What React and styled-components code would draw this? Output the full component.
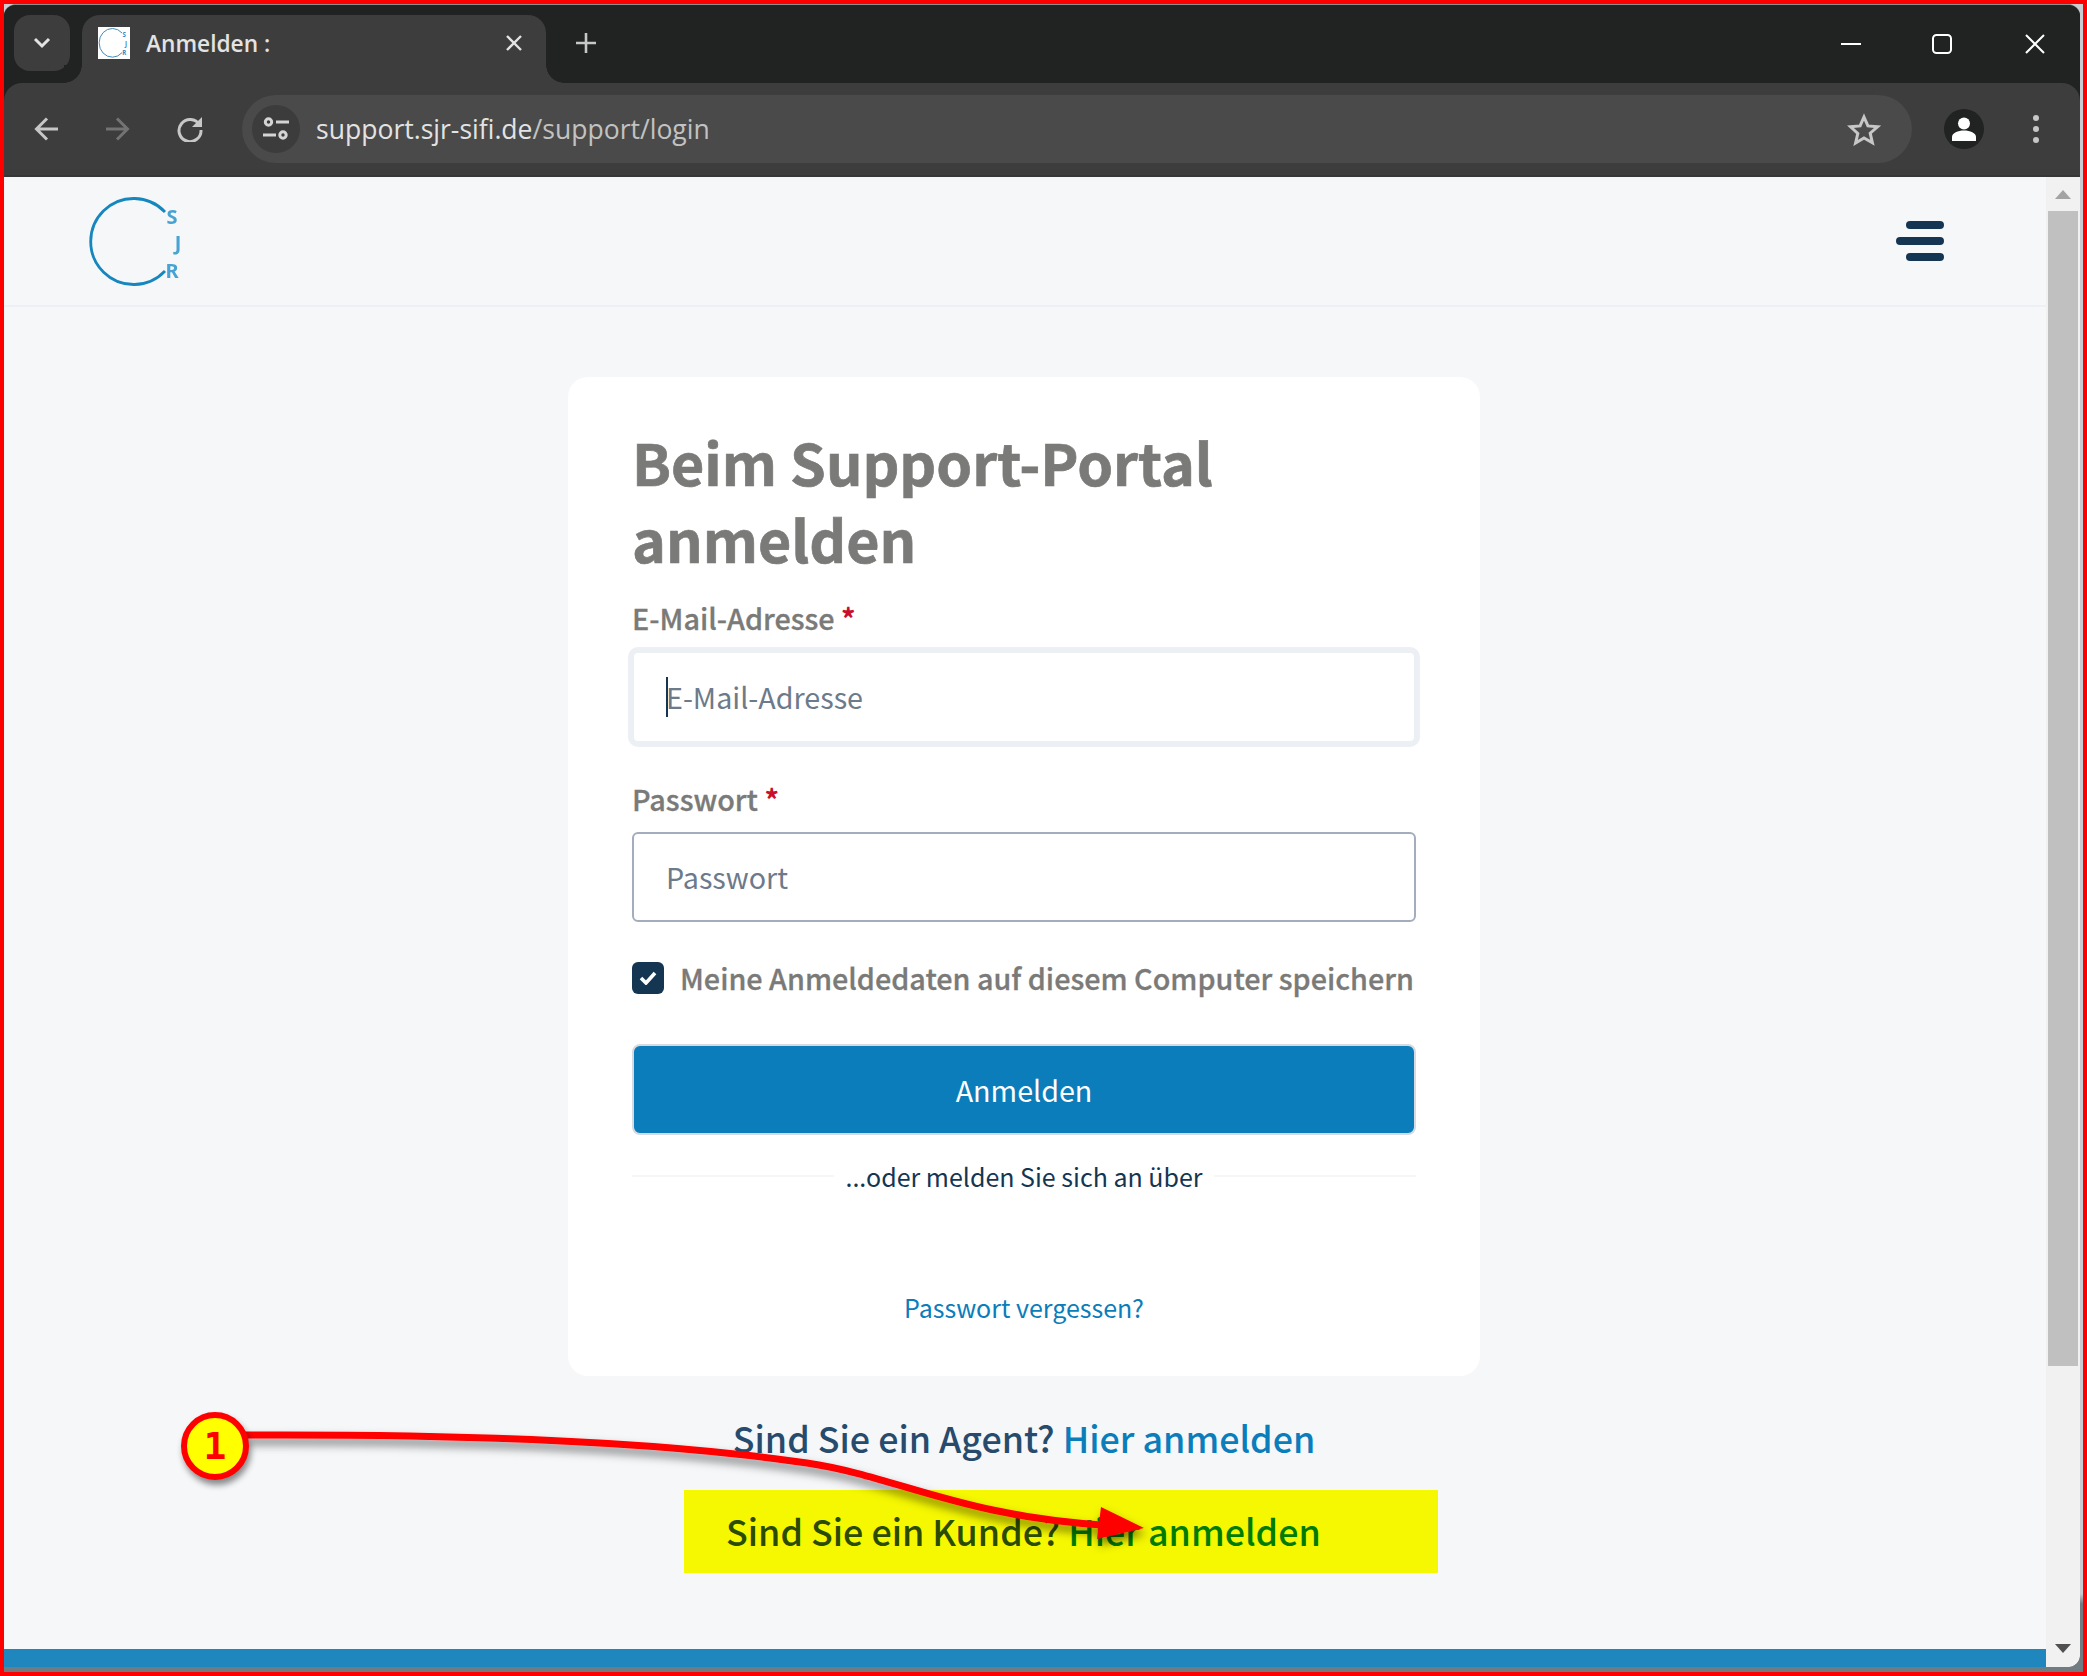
import React from "react";
import styled, { createGlobalStyle } from "styled-components";

const Global = createGlobalStyle`
  html, body { margin: 0; padding: 0; background: #ff0000; }
  * { box-sizing: border-box; }
`;

const SRC = `"Noto Sans CJK SC", "Noto Sans", sans-serif`;
const UI = `"Open Sans", "Noto Sans", sans-serif`;

const Frame = styled.div`
  position: relative;
  width: 2087px;
  height: 1676px;
  overflow: hidden;
  background: #ff0000;
  padding: 4px;
`;
const Desktop = styled.div`
  width: 100%;
  height: 100%;
  background: linear-gradient(#c9ccd0, #c9ccd0 1590px, #707b82 1600px);
  padding: 0 3px 5px 0;
`;
const Browser = styled.div`
  width: 100%;
  height: 100%;
  display: flex;
  flex-direction: column;
  background: #202322;
  border-radius: 12px 12px 12px 0;
  overflow: hidden;
  border-top: 1px solid #8d8f8f;
`;
const TabStrip = styled.div`
  height: 78px;
  flex: none;
  display: flex;
  align-items: flex-start;
  padding: 10px 0 0 10px;
  background: #202322;
`;
const TabMenu = styled.div`
  width: 56px;
  height: 56px;
  border-radius: 16px;
  background: #3d3d3d;
  display: flex;
  align-items: center;
  justify-content: center;
`;
const Tab = styled.div`
  position: relative;
  width: 464px;
  height: 68px;
  margin-left: 12px;
  padding: 12px 16px 0 16px;
  display: flex;
  align-items: flex-start;
  background: #3d3d3d;
  border-radius: 18px 18px 0 0;
  &::before, &::after {
    content: "";
    position: absolute;
    bottom: 0;
    width: 18px;
    height: 18px;
  }
  &::before {
    left: -18px;
    background: radial-gradient(circle at 0 0, #202322 17.5px, #3d3d3d 18px);
  }
  &::after {
    right: -18px;
    background: radial-gradient(circle at 100% 0, #202322 17.5px, #3d3d3d 18px);
  }
`;
const Favicon = styled.svg`
  width: 32px;
  height: 32px;
  flex: none;
  background: #fff;
`;
const TabTitle = styled.span`
  margin: 1px 0 0 16px;
  font: 600 22.7px/32px ${UI};
  color: #e3e3e3;
  flex: 1;
`;
const TabClose = styled.svg`
  width: 18px;
  height: 18px;
  margin: 7px 7px 0 0;
  flex: none;
`;
const NewTab = styled.svg`
  width: 20px;
  height: 20px;
  margin: 18px 0 0 30px;
  flex: none;
`;
const WindowControls = styled.div`
  margin: 1px 0 0 auto;
  display: flex;
  height: 56px;
`;
const WindowButton = styled.div`
  width: 91px;
  height: 56px;
  display: flex;
  align-items: center;
  justify-content: center;
  &:nth-child(2) { margin-right: 2px; }
`;
const Toolbar = styled.div`
  flex: none;
  height: 94px;
  display: flex;
  align-items: center;
  padding: 0 8px 0 6px;
  background: #3d3d3d;
  border-radius: 18px 18px 0 0;
  border-bottom: 2px solid #373737;
`;
const NavButton = styled.div`
  width: 72px;
  height: 72px;
  flex: none;
  display: flex;
  align-items: center;
  justify-content: center;
`;
const Omnibox = styled.div`
  width: 1670px;
  height: 68px;
  margin: 0 16px;
  border-radius: 34px;
  background: #4a4a4a;
  display: flex;
  align-items: center;
  padding: 0 31px 0 10px;
`;
const SiteInfo = styled.div`
  width: 48px;
  height: 48px;
  border-radius: 50%;
  background: #3c3c3c;
  display: flex;
  align-items: center;
  justify-content: center;
`;
const Url = styled.div`
  margin-left: 16px;
  font: 400 26.55px/40px ${UI};
  color: #e3e3e3;
  flex: 1;
  span { color: #c2c2c2; }
`;
const Avatar = styled.div`
  width: 40px;
  height: 40px;
  border-radius: 50%;
  background: #202322;
  display: flex;
  align-items: center;
  justify-content: center;
`;
const Dots = styled.div`
  display: flex;
  flex-direction: column;
  gap: 5px;
  i { width: 6px; height: 6px; border-radius: 50%; background: #c7c7c7; display: block; }
`;

const Viewport = styled.div`
  flex: 1;
  min-height: 0;
  display: flex;
  background: #f6f7f9;
`;
const Page = styled.div`
  flex: 1;
  min-width: 0;
  display: flex;
  flex-direction: column;
  font-family: ${SRC};
`;
const Header = styled.header`
  flex: none;
  height: 130px;
  border-bottom: 2px solid #eef0f5;
  display: flex;
  align-items: flex-start;
  justify-content: space-between;
  padding: 21px 102px 0 87px;
`;
const Logo = styled.svg`
  width: 92px;
  height: 88px;
  overflow: visible;
`;
const Burger = styled.div`
  margin-top: 23px;
  display: flex;
  flex-direction: column;
  align-items: flex-end;
  gap: 8px;
`;
const BurgerBar = styled.i`
  display: block;
  height: 8px;
  width: ${(p) => p.$w}px;
  border-radius: 4px;
  background: #143652;
`;
const Center = styled.main`
  flex: 1;
  display: flex;
  flex-direction: column;
  align-items: center;
  padding: 70px 2px 0 0;
`;
const Card = styled.section`
  width: 912px;
  height: 999px;
  padding: 46px 64px 0;
  background: #fff;
  border-radius: 20px;
  display: flex;
  flex-direction: column;
`;
const Title = styled.h1`
  margin: 0;
  font-size: 57.35px;
  line-height: 77px;
  font-weight: 700;
  color: #7a7a78;
  -webkit-text-stroke: 0.7px #7a7a78;
`;
const Label = styled.label`
  display: block;
  font-size: 28.75px;
  line-height: 40px;
  font-weight: 500;
  color: #7a7a78;
  -webkit-text-stroke: 0.3px #7a7a78;
  margin-top: ${(p) => p.$top}px;
  b { color: #c8102e; font-weight: 700; -webkit-text-stroke: 0; }
`;
const Field = styled.div`
  position: relative;
  margin-top: 13px;
`;
const Input = styled.input`
  display: block;
  width: 100%;
  height: ${(p) => (p.$focus ? 92 : 90)}px;
  padding: 0 32px 2px;
  font-family: ${SRC};
  font-size: 28.7px;
  background: #fff;
  border: 2px solid ${(p) => (p.$focus ? "#ecf0f4" : "#a4adbd")};
  border-radius: 6px;
  outline: none;
  box-shadow: ${(p) => (p.$focus ? "0 0 0 4px #ecf0f4" : "none")};
  &::placeholder { color: #6c7a8a; opacity: 1; }
`;
const Caret = styled.i`
  position: absolute;
  left: 34px;
  top: 26px;
  width: 2px;
  height: 40px;
  background: #143652;
`;
const CheckRow = styled.div`
  display: flex;
  align-items: center;
  margin-top: 40px;
  height: 32px;
`;
const CheckBox = styled.div`
  width: 32px;
  height: 32px;
  flex: none;
  border-radius: 6px;
  background: #143652;
  display: flex;
  align-items: center;
  justify-content: center;
`;
const CheckLabel = styled.span`
  margin-left: 16px;
  font-size: 28.75px;
  line-height: 40px;
  font-weight: 500;
  color: #7a7a78;
  -webkit-text-stroke: 0.3px #7a7a78;
  white-space: nowrap;
`;
const Submit = styled.button`
  display: block;
  width: 100%;
  height: 91px;
  margin-top: 50px;
  background: #0a7dba;
  color: #fff;
  border: 2px solid #d5dbe0;
  border-radius: 8px;
  font-family: ${SRC};
  font-size: 28.7px;
`;
const Divider = styled.div`
  display: flex;
  align-items: center;
  justify-content: center;
  margin-top: 23px;
  height: 36px;
  font-size: 25px;
  line-height: 36px;
  color: #143652;
  gap: 11px;
  &::before, &::after {
    content: "";
    flex: 1;
    height: 2px;
    background: #f6f6f6;
  }
`;
const Forgot = styled.a`
  margin-top: 95px;
  text-align: center;
  font-size: 25px;
  line-height: 36px;
  color: #0a7dba;
`;
const Prompt = styled.div`
  margin-top: ${(p) => p.$top}px;
  font-size: 35.8px;
  line-height: 50px;
  font-weight: 500;
  color: #274b6d;
  white-space: nowrap;
  a { color: #0a7dba; }
`;
const Highlight = styled.div`
  width: 754px;
  height: 83px;
  margin: 28px 0 0 74px;
  background: #f5f800;
  display: flex;
  align-items: center;
  padding: 0 0 3px 42px;
`;
const CustomerPrompt = styled(Prompt)`
  color: #2a4b00;
  a { color: #007c00; }
`;
const Footer = styled.footer`
  flex: none;
  height: 18px;
  background: #1f87bd;
`;
const Scrollbar = styled.div`
  flex: none;
  width: 34px;
  background: #f1f1f1;
  display: flex;
  flex-direction: column;
  align-items: center;
  border-bottom-right-radius: 14px;
`;
const ScrollArrow = styled.svg`
  flex: none;
  width: 16px;
  height: 9px;
  margin: ${(p) => p.$m};
`;
const ScrollThumb = styled.div`
  width: 30px;
  height: 1155px;
  background: #c0c0c0;
  flex: none;
`;
const Annotation = styled.svg`
  position: absolute;
  left: 0;
  top: 0;
  width: 2087px;
  height: 1676px;
  pointer-events: none;
`;
const Badge = styled.div`
  position: absolute;
  left: 181px;
  top: 1412px;
  width: 68px;
  height: 68px;
  border-radius: 50%;
  background: #ffff00;
  border: 6px solid #ff0000;
  box-shadow: 2px 5px 6px rgba(0, 0, 0, 0.45);
  display: flex;
  align-items: center;
  justify-content: center;
  font: 700 38px/1 "DejaVu Sans Mono", monospace;
  color: #ff0000;
`;

const LogoMark = ({ arc, letter, width, blur }) => (
  <g filter={blur ? "url(#logoBlur)" : undefined}>
    <path d="M74 14 A 43 43 0 1 0 74 73" fill="none" stroke={arc} strokeWidth={width} />
    <g fontFamily="Noto Sans, sans-serif" fontSize="20" fontWeight="700" fill={letter} textAnchor="middle">
      <text x="81" y="26">S</text>
      <text x="87" y="52">J</text>
      <text x="81" y="80">R</text>
    </g>
  </g>
);

export default function App() {
  return (
    <>
      <Global />
      <Frame>
        <Desktop>
          <Browser>
            <TabStrip>
              <TabMenu>
                <svg width="18" height="12" viewBox="0 0 18 12"><path d="M2 2l7 7 7-7" fill="none" stroke="#e3e3e3" strokeWidth="3" /></svg>
              </TabMenu>
              <Tab>
                <Favicon viewBox="-4 -4 104 96" preserveAspectRatio="none"><LogoMark arc="#3b86b8" letter="#3b86b8" width={3} /></Favicon>
                <TabTitle>Anmelden :</TabTitle>
                <TabClose viewBox="0 0 18 18"><path d="M2 2l14 14M16 2L2 16" stroke="#e3e3e3" strokeWidth="2.4" /></TabClose>
              </Tab>
              <NewTab viewBox="0 0 20 20"><path d="M10 0v20M0 10h20" stroke="#c7c7c7" strokeWidth="2.6" /></NewTab>
              <WindowControls>
                <WindowButton><svg width="20" height="2"><rect width="20" height="2" fill="#fff" /></svg></WindowButton>
                <WindowButton><svg width="20" height="20"><rect x="1" y="1" width="18" height="18" rx="3.5" fill="none" stroke="#fff" strokeWidth="2" /></svg></WindowButton>
                <WindowButton><svg width="20" height="20"><path d="M1 1l18 18M19 1L1 19" stroke="#fff" strokeWidth="2" /></svg></WindowButton>
              </WindowControls>
            </TabStrip>
            <Toolbar>
              <NavButton><svg width="24" height="24" viewBox="0 0 24 24"><path d="M24 12H3M13 1.5L2.5 12 13 22.5" fill="none" stroke="#c7c7c7" strokeWidth="3" /></svg></NavButton>
              <NavButton><svg width="24" height="24" viewBox="0 0 24 24"><path d="M0 12h21M11 1.5L21.5 12 11 22.5" fill="none" stroke="#737373" strokeWidth="3" /></svg></NavButton>
              <NavButton>
                <svg width="26" height="26" viewBox="0 0 26 26"><path d="M22.5 9A11 11 0 1 0 24 14" fill="none" stroke="#c7c7c7" strokeWidth="3" /><path d="M25 1v10H15z" fill="#c7c7c7" /></svg>
              </NavButton>
              <Omnibox>
                <SiteInfo>
                  <svg width="26" height="24" viewBox="0 0 26 24" fill="none" stroke="#d4d4d4" strokeWidth="3"><circle cx="5.5" cy="5" r="3.2" /><path d="M13 5h13M0 18h13" /><circle cx="20" cy="18" r="3.2" /></svg>
                </SiteInfo>
                <Url>support.sjr-sifi.de<span>/support/login</span></Url>
                <svg width="34" height="33" viewBox="0 0 34 33"><path d="M17 4l3.900 8.900 9.600.9-7.300 6.400 2.200 9.500L17 25l-8.400 5 2.200-9.500L3.500 13.800l9.600-.9z" fill="none" stroke="#c7c7c7" strokeWidth="3" /></svg>
              </Omnibox>
              <NavButton>
                <Avatar>
                  <svg width="26" height="26" viewBox="0 0 26 26"><circle cx="13" cy="7.500" r="6" fill="#fff" /><path d="M1 25v-4c0-4 6-6.500 12-6.500S25 17 25 21v4z" fill="#fff" /></svg>
                </Avatar>
              </NavButton>
              <NavButton><Dots><i /><i /><i /></Dots></NavButton>
            </Toolbar>
            <Viewport>
              <Page>
                <Header>
                  <Logo viewBox="0 0 92 88">
                    <defs><filter id="logoBlur" x="-10%" y="-10%" width="120%" height="120%"><feGaussianBlur stdDeviation="0.7" /></filter></defs>
                    <LogoMark arc="#1786bf" letter="#4aa3d2" width={2.8} blur />
                  </Logo>
                  <Burger>
                    <BurgerBar $w={38} />
                    <BurgerBar $w={48} />
                    <BurgerBar $w={38} />
                  </Burger>
                </Header>
                <Center>
                  <Card>
                    <Title>Beim Support-Portal anmelden</Title>
                    <Label $top={21}>E-Mail-Adresse <b>*</b></Label>
                    <Field>
                      <Input $focus placeholder="E-Mail-Adresse" />
                      <Caret />
                    </Field>
                    <Label $top={36}>Passwort <b>*</b></Label>
                    <Field>
                      <Input placeholder="Passwort" />
                    </Field>
                    <CheckRow>
                      <CheckBox>
                        <svg width="18" height="14" viewBox="0 0 18 14"><path d="M2 7l5 5 9-10" fill="none" stroke="#fff" strokeWidth="3.6" /></svg>
                      </CheckBox>
                      <CheckLabel>Meine Anmeldedaten auf diesem Computer speichern</CheckLabel>
                    </CheckRow>
                    <Submit>Anmelden</Submit>
                    <Divider>...oder melden Sie sich an über</Divider>
                    <Forgot>Passwort vergessen?</Forgot>
                  </Card>
                  <Prompt $top={36}>Sind Sie ein Agent? <a>Hier anmelden</a></Prompt>
                  <Highlight>
                    <CustomerPrompt $top={0}>Sind Sie ein Kunde? <a>Hier anmelden</a></CustomerPrompt>
                  </Highlight>
                </Center>
                <Footer />
              </Page>
              <Scrollbar>
                <ScrollArrow viewBox="0 0 16 9" $m="13px 0 12px"><path d="M8 0l8 9H0z" fill="#a3a3a3" /></ScrollArrow>
                <ScrollThumb />
                <ScrollArrow viewBox="0 0 16 9" $m="auto 0 14px"><path d="M0 0h16L8 9z" fill="#505050" /></ScrollArrow>
              </Scrollbar>
            </Viewport>
          </Browser>
        </Desktop>
        <Annotation viewBox="0 0 2087 1676">
          <defs>
            <filter id="sh" x="-10%" y="-50%" width="120%" height="220%">
              <feDropShadow dx="2" dy="6" stdDeviation="5" floodColor="#000" floodOpacity="0.5" />
            </filter>
          </defs>
          <g filter="url(#sh)">
            <path d="M245 1435 C 450 1434 650 1440 807 1463 C 900 1477 960 1517 1115 1526" fill="none" stroke="#ff0000" strokeWidth="7" />
            <path d="M1144 1528 L1101 1507 L1097 1539 Z" fill="#ff0000" />
          </g>
        </Annotation>
        <Badge>1</Badge>
      </Frame>
    </>
  );
}
